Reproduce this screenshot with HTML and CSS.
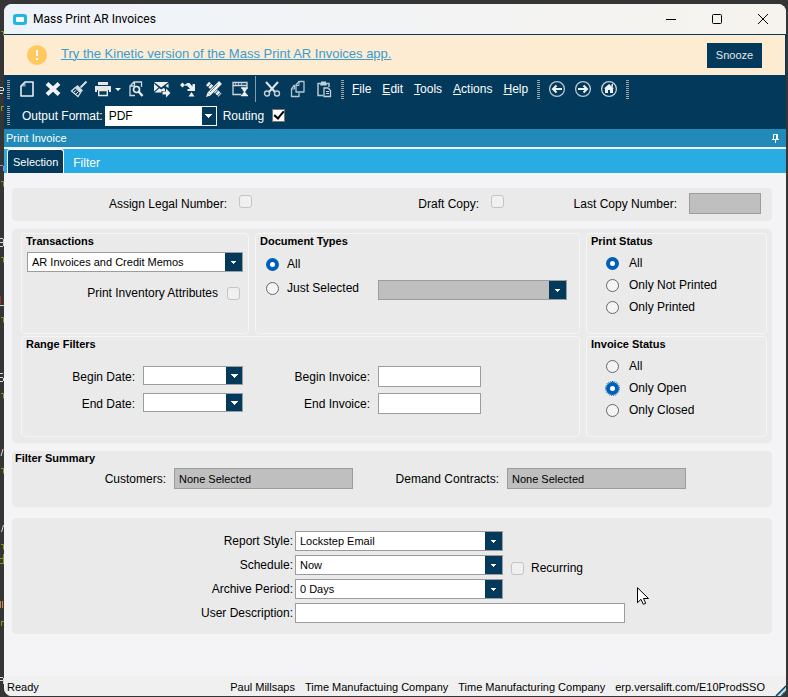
FILE: index.html
```html
<!DOCTYPE html>
<html lang="en">
<head>
<meta charset="utf-8">
<title>Mass Print AR Invoices</title>
<link rel="stylesheet" href="styles.css">
</head>
<body>
<svg class="backdrop" aria-hidden="true" fill="none">
  <path stroke="#8c9628" d="M1 31.500h2.500v4M1 106.500h3M1.500 106v5M1 181.500h2.500v5M1 257.500h2.500v5M1 317.500h2.500v5M1 393.500h2.500v5M1 468.500h2.500v5M1 544.500h2.500v5M0 558.500h3.500M3.500 554v10M0 563.500h3M1 621.500h3M1.500 621v5"/>
  <path stroke="#d8d8d8" d="M0 87.500h3M3.500 88v3M0 90.500h4M0 93.500h3M0 238.500h3M3.500 239v7M0 242.500h3M0 246.500h3M0 305.500h4M0 373.500h3M0 377.500h3M3.500 378v3M0 381.500h3M3 449l-2 7M3.500 525l-2 7M0 677.500h3M3.500 678v6M0 680.500h3"/>
  <path stroke="#8f8ff0" d="M0 165.500h3M3.500 166v5"/>
  <path stroke="#a03030" d="M.500 296v8"/>
  <path stroke="#c98545" d="M.500 601v7M2.500 601v7"/>
</svg>
<div class="window">
  <header class="titlebar">
    <svg class="app-icon" viewBox="0 0 14 11"><rect width="14" height="11" rx="3" fill="#1fb6e8"/><rect x="3" y="3" width="8" height="5" rx="1" fill="#fff"/></svg>
    <h1 class="app-title">Mass Print AR Invoices</h1>
    <button class="win-btn" aria-label="Minimize"><svg viewBox="0 0 12 12"><path d="M1 6.500h10"/></svg></button>
    <button class="win-btn" aria-label="Maximize"><svg viewBox="0 0 12 12"><rect x="1.500" y="1.500" width="9" height="9" rx="1"/></svg></button>
    <button class="win-btn" aria-label="Close"><svg viewBox="0 0 12 12"><path d="M1 1l10 10M11 1L1 11"/></svg></button>
  </header>

  <div class="banner">
    <svg class="warn" viewBox="0 0 20 20"><circle cx="10" cy="10" r="10" fill="#ffc960"/><path d="M10 5v6M10 13v2" stroke="#fff" stroke-width="2"/></svg>
    <a class="banner-link" href="#">Try the Kinetic version of the Mass Print AR Invoices app.</a>
    <button class="snooze">Snooze</button>
  </div>

  <div class="toolbars">
    <div class="toolbar">
      <i class="grip"></i>
      <button class="tool" aria-label="New"><svg viewBox="0 0 18 18"><path d="M7 2h8v14H3V6z" fill="none" stroke="#e8eef2" stroke-width="1.600" stroke-linejoin="round"/><path d="M3 6.500h4.500V2z" fill="#e8eef2" opacity=".6"/></svg></button>
      <button class="tool" aria-label="Delete"><svg viewBox="0 0 18 18"><path d="M3 3.500l12 11M15 3.500l-12 11" stroke="#f2f2f2" stroke-width="4"/></svg></button>
      <button class="tool" aria-label="Clear"><svg viewBox="0 0 18 18"><path d="M16.500 1.500l-6 6" stroke="#d9dfe3" stroke-width="2"/><path d="M7.500 5l5.500 5.500-2 2L5.500 7z" fill="#d9dfe3"/><path d="M5.500 7.500l5 5-2.500 4-6.500-5.500z" fill="none" stroke="#d9dfe3" stroke-width="1.300"/><path d="M4 12l2.500-2M6 14l2.500-2.500" stroke="#d9dfe3"/></svg></button>
      <button class="tool tool-print" aria-label="Print"><svg viewBox="0 0 18 18"><path d="M4 2h10v3H4zM1 6h16v6h-2v-2H3v2H1z" fill="#e6e6e6"/><path d="M4.700 10.500h8.600v5H4.700z" fill="none" stroke="#e6e6e6" stroke-width="1.400"/></svg><svg class="drop" viewBox="0 0 6 3"><path d="M0 0h6L3 3z" fill="#fff"/></svg></button>
      <button class="tool" aria-label="Print preview"><svg viewBox="0 0 18 18"><path d="M3 13V6l4-4h7.500v5M3 6h4.500V2M3 12.500v3h5" fill="none" stroke="#cfd8de" stroke-width="1.300"/><circle cx="9.500" cy="9.500" r="3" fill="none" stroke="#e8edf0" stroke-width="1.700"/><path d="M11.500 11.500l4 4.500" stroke="#e8edf0" stroke-width="2.400"/></svg></button>
      <button class="tool" aria-label="Email"><svg viewBox="0 0 18 18"><path d="M1 2h14.500L8.200 7.500zM1 3.500l4.500 4L1 11.500zM15.500 3.500V8l-3-2zM6.300 8.200l1.900 1.300 2.500-1.500 1.300 1V11H8.500v1.500h-7z" fill="#efefef"/><path d="M9.500 11.500H13V8.500l4.500 4.500-4.500 4.500v-3H9.500z" fill="#efefef"/></svg></button>
      <button class="tool" aria-label="Route"><svg viewBox="0 0 18 18"><path d="M3.500 2.500L6 5 3.500 7.500 1 5zM6 4.200h2v1.600H6z" fill="#efefef"/><path d="M7.500 3h3l3 3.500V4H16v7H8.500V9H11L7.500 5z" fill="#efefef"/><path d="M12.500 12l3 4.500h-6z" fill="#efefef"/></svg></button>
      <button class="tool" aria-label="Customize"><svg viewBox="0 0 18 18"><path d="M2.500 3.500L15 15" stroke="#efefef" stroke-width="4.500" stroke-dasharray="2.500 .700"/><path d="M15.500 2.500L3 15" stroke="#033a5b" stroke-width="5"/><path d="M15.500 2.500L4 14" stroke="#efefef" stroke-width="4"/><path d="M12.500 4.500L5 12" stroke="#033a5b" stroke-width=".6"/><path d="M2.500 12.500L1 17l4.500-1.500z" fill="#efefef"/></svg></button>
      <button class="tool" aria-label="Schedule window"><svg viewBox="0 0 18 18"><path d="M16 7V2.500H2v12h8M2 5.500h14" fill="none" stroke="#cfd8de" stroke-width="1.300"/><path d="M4 4h1M7 4h1M10 4h1" stroke="#fff"/><path d="M10 8h7M10 15.500h7" stroke="#efefef" stroke-width="1.500"/><path d="M11 8h5l-.500 2-1.500 2 1.500 1.500.500 2h-5l.500-2 1.500-1.500-1.500-2z" fill="#efefef"/></svg></button>
      <i class="sep"></i>
      <button class="tool" aria-label="Cut"><svg viewBox="0 0 18 18"><path d="M3 2l9 10M15 2L6 12" stroke="#dfe5e9" stroke-width="2"/><circle cx="4" cy="13.500" r="2.500" fill="none" stroke="#c3ced6" stroke-width="1.400"/><circle cx="14" cy="13.500" r="2.500" fill="none" stroke="#c3ced6" stroke-width="1.400"/></svg></button>
      <button class="tool" aria-label="Copy"><svg viewBox="0 0 18 18"><path d="M7 12V5l3-3.500h5V12z" fill="none" stroke="#b9c6cf" stroke-width="1.300" stroke-linejoin="round"/><path d="M6 5.500H5L2.500 9v7.500h7.500v-3.500" fill="none" stroke="#b9c6cf" stroke-width="1.300" stroke-linejoin="round"/><path d="M7 5.500h3V2M2.500 9h3V6" fill="none" stroke="#b9c6cf"/></svg></button>
      <button class="tool" aria-label="Paste"><svg viewBox="0 0 18 18"><path d="M14 7V3.500H3V15.500h5" fill="none" stroke="#b9c6cf" stroke-width="1.500"/><path d="M6 3V1.500h5V3l1 2.500H5z" fill="#c6d0d7"/><path d="M9 8h4l2.500 2.500V16.500H9z" fill="none" stroke="#c6d0d7" stroke-width="1.300"/><path d="M11 11.500h3M11 13.500h3" stroke="#c6d0d7"/></svg></button>
      <i class="grip"></i>
      <nav class="menu">
        <a href="#"><u>F</u>ile</a><a href="#"><u>E</u>dit</a><a href="#"><u>T</u>ools</a><a href="#"><u>A</u>ctions</a><a href="#"><u>H</u>elp</a>
      </nav>
      <i class="grip"></i>
      <button class="tool" aria-label="Back"><svg viewBox="0 0 18 18"><circle cx="9" cy="9" r="7.400" fill="none" stroke="#b9c6cf" stroke-width="1.300"/><path d="M14 9H5M8.500 5.500L5 9l3.500 3.500" fill="none" stroke="#f2f2f2" stroke-width="2"/></svg></button>
      <button class="tool" aria-label="Forward"><svg viewBox="0 0 18 18"><circle cx="9" cy="9" r="7.400" fill="none" stroke="#b9c6cf" stroke-width="1.300"/><path d="M4 9h9M9.500 5.500L13 9l-3.500 3.500" fill="none" stroke="#f2f2f2" stroke-width="2"/></svg></button>
      <button class="tool" aria-label="Home"><svg viewBox="0 0 18 18"><circle cx="9" cy="9" r="7.400" fill="none" stroke="#c6d0d7" stroke-width="1.300"/><path d="M9 4l5 4.500h-1V13h-3v-3H8v3H5V8.500H4zM11.500 4H13v3l-1.500-1z" fill="#f2f2f2"/></svg></button>
      <i class="grip"></i>
    </div>
    <div class="toolbar toolbar-format">
      <i class="grip"></i>
      <label class="format-label" for="format">Output Format:</label>
      <span class="combo combo-format"><select id="format"><option>PDF</option></select></span>
      <label class="routing-label" for="routing">Routing</label>
      <input class="routing" type="checkbox" id="routing" checked>
    </div>
  </div>

  <div class="panel-head">
    <h2>Print Invoice</h2>
    <svg class="pin" viewBox="0 0 7 9"><path d="M1.500 5V.500h4V5M0 5.500h7M3.500 6v3M4.500 0v5" fill="none" stroke="#fff"/></svg>
  </div>
  <div class="tabs">
    <button class="tab tab-active">Selection</button>
    <button class="tab">Filter</button>
  </div>

  <main class="content">
    <section class="card card-copy">
      <label class="lbl" for="legal">Assign Legal Number:</label>
      <input class="check" type="checkbox" id="legal" disabled>
      <label class="lbl" for="draft">Draft Copy:</label>
      <input class="check" type="checkbox" id="draft" disabled>
      <label class="lbl" for="lastcopy">Last Copy Number:</label>
      <input class="field field-off" id="lastcopy" disabled>
    </section>

    <section class="card card-groups">
      <div class="group">
        <h3>Transactions</h3>
        <span class="combo combo-trans"><select aria-label="Transactions"><option>AR Invoices and Credit Memos</option></select></span>
        <div class="attr-row">
          <label for="attrs">Print Inventory Attributes</label>
          <input class="check" type="checkbox" id="attrs" disabled>
        </div>
      </div>
      <div class="group">
        <h3>Document Types</h3>
        <div class="doc-types">
          <label class="radio"><input type="radio" name="doc" checked>All</label>
          <label class="radio"><input type="radio" name="doc">Just Selected</label>
          <span class="combo combo-off"><select aria-label="Selected document types" disabled></select></span>
        </div>
      </div>
      <div class="group">
        <h3>Print Status</h3>
        <div class="radios">
          <label class="radio"><input type="radio" name="ps" checked>All</label>
          <label class="radio"><input type="radio" name="ps">Only Not Printed</label>
          <label class="radio"><input type="radio" name="ps">Only Printed</label>
        </div>
      </div>
      <div class="group group-wide">
        <h3>Range Filters</h3>
        <div class="range">
          <label class="lbl" for="bd">Begin Date:</label>
          <span class="combo combo-date"><input id="bd"></span>
          <label class="lbl" for="bi">Begin Invoice:</label>
          <input class="field" id="bi">
          <label class="lbl" for="ed">End Date:</label>
          <span class="combo combo-date"><input id="ed"></span>
          <label class="lbl" for="ei">End Invoice:</label>
          <input class="field" id="ei">
        </div>
      </div>
      <div class="group">
        <h3>Invoice Status</h3>
        <div class="radios">
          <label class="radio"><input type="radio" name="is">All</label>
          <label class="radio"><input class="focused" type="radio" name="is" checked>Only Open</label>
          <label class="radio"><input type="radio" name="is">Only Closed</label>
        </div>
      </div>
    </section>

    <section class="card card-summary">
      <h3>Filter Summary</h3>
      <div class="summary">
        <label class="lbl" for="cust">Customers:</label>
        <input class="field field-off" id="cust" value="None Selected" readonly>
        <label class="lbl" for="dem">Demand Contracts:</label>
        <input class="field field-off" id="dem" value="None Selected" readonly>
      </div>
    </section>

    <section class="card card-report">
      <label class="lbl" for="style">Report Style:</label>
      <span class="combo"><select id="style"><option>Lockstep Email</option></select></span>
      <label class="lbl" for="sched">Schedule:</label>
      <span class="combo"><select id="sched"><option>Now</option></select></span>
      <label class="recurring"><input class="check" type="checkbox" disabled>Recurring</label>
      <label class="lbl" for="arch">Archive Period:</label>
      <span class="combo"><select id="arch"><option>0 Days</option></select></span>
      <label class="lbl" for="desc">User Description:</label>
      <input class="field field-desc" id="desc">
      <svg class="pointer" viewBox="0 0 12 18"><path d="M.500 .700v15l3.500-3.400 2.300 5 2.400-1-2.200-4.800h5z" fill="#fff" stroke="#000"/></svg>
    </section>
  </main>

  <footer class="status">
    <span class="ready">Ready</span>
    <span>Paul Millsaps</span>
    <span>Time Manufactuing Company</span>
    <span>Time Manufacturing Company</span>
    <span>erp.versalift.com/E10ProdSSO</span>
    <svg class="resize" viewBox="0 0 11 11"><path d="M1 11L11 1M6 11l5-5" stroke="#033a5b" stroke-width="1.500"/><path d="M2.500 11L11 2.500M7.500 11L11 7.500" stroke="#29abe3"/></svg>
  </footer>
</div>
</body>
</html>
```
FILE: styles.css
```css
* { box-sizing: border-box; }

body {
  position: relative;
  margin: 0;
  min-height: 100vh;
  padding: 4px 2px 1px 4px;
  display: flex;
  background: #353535;
  color: #000;
  font: 12px/14px "Liberation Sans", Arial, sans-serif;
}

h1, h2, h3 { margin: 0; font-size: 11px; }
button, input, select { margin: 0; font: inherit; color: inherit; }
button { border: 0; padding: 0; background: none; }
svg { display: block; }

/* Bits of the editor showing behind the window's left edge */
.backdrop {
  position: absolute;
  left: 0;
  top: 0;
  width: 4px;
  height: 100%;
}

.window {
  flex: 1;
  display: flex;
  flex-direction: column;
  min-width: 0;
  overflow: hidden;
  border-radius: 8px;
  background: #f4f4f6;
}

/* Title bar */
.titlebar {
  display: flex;
  align-items: center;
  height: 30px;
  padding-left: 9px;
  background: linear-gradient(90deg, #eef3fa, #f3f3f3 60%, #f6f3ee);
}
.app-icon { width: 14px; height: 11px; }
.app-title {
  flex: 1;
  margin-left: 6px;
  font: 12px/16px Roboto, "Noto Sans", sans-serif;
}
.win-btn { width: 46px; height: 30px; display: grid; place-items: center; }
.win-btn svg { width: 12px; height: 12px; fill: none; stroke: #000; }

/* Upgrade banner */
.banner {
  display: flex;
  align-items: center;
  height: 41px;
  padding: 0 23px;
  border: solid #033a5b;
  border-width: 1px 1px 0 0;
  background: #fdecd2;
}
.warn { width: 20px; height: 20px; }
.banner-link {
  flex: 1;
  margin-left: 14px;
  padding-bottom: 3px;
  font-size: 13px;
  line-height: 16px;
  color: #3b9bd3;
}
.snooze { width: 55px; height: 25px; background: #033a5b; color: #e6e6e6; font-size: 11px; }

/* Toolbars */
.toolbars { background: #033a5b; color: #fff; padding-bottom: 1px; }
.toolbar { display: flex; align-items: center; height: 28px; padding-left: 3px; }
.toolbar-format { height: 25px; }
.grip {
  width: 3px;
  height: 19px;
  margin: 0 4px;
  background: repeating-linear-gradient(#a3a3a3 0 1px, #033a5b 1px 2px);
}
.toolbar > .grip:first-child { margin-left: 0; }
.tool { width: 26px; height: 26px; display: grid; place-items: center; }
.tool svg { width: 18px; height: 18px; }
.tool-print { width: 31px; display: flex; align-items: center; gap: 3px; padding-left: 2px; }
.tool .drop { width: 6px; height: 3px; }
.sep { width: 1px; height: 26px; margin: 0 3px 0 2px; background: #8a9ba8; }
.menu { display: flex; gap: 11px; margin: 0 5px 0 4px; }
.menu a { color: #fff; text-decoration: none; }
.format-label { margin: 0 2px 0 8px; }
.routing-label { margin: 0 8px 0 6px; }
.routing {
  appearance: none;
  display: grid;
  place-items: center;
  width: 13px;
  height: 13px;
  border: 1px solid #777;
  background: #fff;
}
.routing:checked::after {
  content: "";
  width: 4px;
  height: 8px;
  margin-top: -3px;
  border: solid #000;
  border-width: 0 2px 2px 0;
  transform: rotate(40deg);
}

/* Combo boxes */
.combo { position: relative; display: block; height: 20px; }
.combo select, .combo input {
  appearance: none;
  display: block;
  width: 100%;
  height: 100%;
  padding: 0 20px 0 4px;
  border: 1px solid #9c9c9c;
  border-radius: 0;
  background: #fff;
  font-size: 11px;
  color: #000;
  opacity: 1;
}
.combo::after {
  content: "";
  position: absolute;
  top: 1px;
  right: 1px;
  bottom: 1px;
  width: 17px;
  pointer-events: none;
  background:
    linear-gradient(#fff, #fff) center top 8px / 5px 1px no-repeat,
    linear-gradient(#fff, #fff) center top 9px / 3px 1px no-repeat,
    linear-gradient(#fff, #fff) center top 10px / 1px 1px no-repeat,
    #033a5b;
}
.combo-format { width: 112px; }
.combo-format select { padding-left: 3px; font-size: 12px; border-color: #fff; }
.combo-format::after { width: 14px; }
.combo-date::after { width: 16px; }
.combo-format::after, .combo-date::after {
  background:
    linear-gradient(#fff, #fff) center top 7px / 7px 1px no-repeat,
    linear-gradient(#fff, #fff) center top 8px / 5px 1px no-repeat,
    linear-gradient(#fff, #fff) center top 9px / 3px 1px no-repeat,
    linear-gradient(#fff, #fff) center top 10px / 1px 1px no-repeat,
    #033a5b;
}
.combo-off select { background: #bfbfbf; }

/* Panel heading and tabs */
.panel-head {
  display: flex;
  align-items: center;
  justify-content: space-between;
  height: 20px;
  padding: 0 7px 0 2px;
  border-bottom: 2px solid #f4f4f6;
  background: #218ab8;
  color: #fff;
}
.panel-head h2 { font-weight: normal; }
.pin { width: 7px; height: 9px; }
.tabs { display: flex; height: 24px; padding-left: 3px; background: #29abe3; }
.tab { height: 24px; padding: 4px 9px 0; color: #fff; }
.tab-active {
  padding: 0 5px;
  border: 1px solid #fff;
  border-bottom: 0;
  border-radius: 3px 3px 0 0;
  background: #033a5b;
  font-size: 11px;
}

/* Form */
.content { flex: 1; padding: 15px 14px 20px 8px; }
.card { border-radius: 4px; background: #eaeaea; }
.lbl { text-align: right; }
.check {
  appearance: none;
  display: block;
  width: 13px;
  height: 13px;
  border: 1px solid #c4c4c4;
  border-radius: 3px;
  background: #f0f0f0;
}
.field {
  width: 100%;
  height: 21px;
  padding: 0 4px;
  border: 1px solid #9c9c9c;
  background: #fff;
  font-size: 11px;
}
.field-off { background: #bfbfbf; }

.card-copy {
  display: grid;
  grid-template-columns: 215px 14px 214px 14px 1fr 72px;
  column-gap: 12px;
  align-items: center;
  padding: 5px 11px 7px 0;
}
.card-copy .check { margin-bottom: 4px; }

.card-groups {
  display: grid;
  grid-template-columns: 228px 1fr 181px;
  grid-auto-rows: 101px;
  gap: 2px 6px;
  margin-top: 8px;
  padding: 4px 5px 6px 9px;
}
.group { border: 1px solid #f5f5f5; border-radius: 4px; }
.group h3 { padding-left: 4px; }
.group-wide { grid-column: span 2; }
.combo-trans { margin: 4px 5px 0; }
.attr-row { display: flex; justify-content: flex-end; align-items: center; gap: 9px; margin: 14px 8px 0 0; }

.radio { display: flex; align-items: center; gap: 10px; }
.radio input {
  appearance: none;
  width: 13px;
  height: 13px;
  border: 1px solid #666;
  border-radius: 50%;
  background: #f4f4f4;
}
.radio input:checked { border: 4px solid #005fb8; background: #fff; }
.radio .focused { outline: 1px dotted #005fb8; }
.radios { display: grid; grid-auto-rows: 22px; padding: 4px 0 0 19px; }
.doc-types {
  display: grid;
  grid-template-columns: 112px 1fr;
  grid-template-rows: 24px 24px;
  align-items: center;
  padding: 4px 12px 0 10px;
}
.doc-types .radio { gap: 8px; }
.doc-types .radio:first-child { grid-column: span 2; }
.combo-off { align-self: end; }

.range {
  display: grid;
  grid-template-columns: 113px 100px 119px 103px;
  gap: 6px 8px;
  align-items: center;
  padding-top: 15px;
}
.combo-date { height: 19px; align-self: start; }

.card-summary { margin-top: 8px; padding-bottom: 18px; }
.card-summary h3 { padding-left: 3px; }
.summary {
  display: grid;
  grid-template-columns: 154px 179px 138px 179px;
  column-gap: 8px;
  align-items: center;
  padding-top: 3px;
}

.card-report {
  position: relative;
  display: grid;
  grid-template-columns: 281px 208px 114px;
  grid-auto-rows: 20px;
  gap: 4px 2px;
  align-items: center;
  margin-top: 11px;
  padding: 13px 0 11px;
}
.card-report .lbl { grid-column: 1; }
.recurring { display: flex; align-items: center; gap: 7px; padding-left: 6px; align-self: end; }
.field-desc { grid-column: 2 / span 2; height: 20px; width: 330px; }
.pointer { position: absolute; left: 625px; top: 69px; width: 12px; height: 18px; }

/* Status bar */
.status {
  display: flex;
  gap: 10px;
  height: 20px;
  padding: 4px 0 0 3px;
  background: #f0f0f0;
  font-size: 11px;
}
.ready { flex: 1; }
.resize { width: 11px; height: 11px; margin-top: 5px; }
```
